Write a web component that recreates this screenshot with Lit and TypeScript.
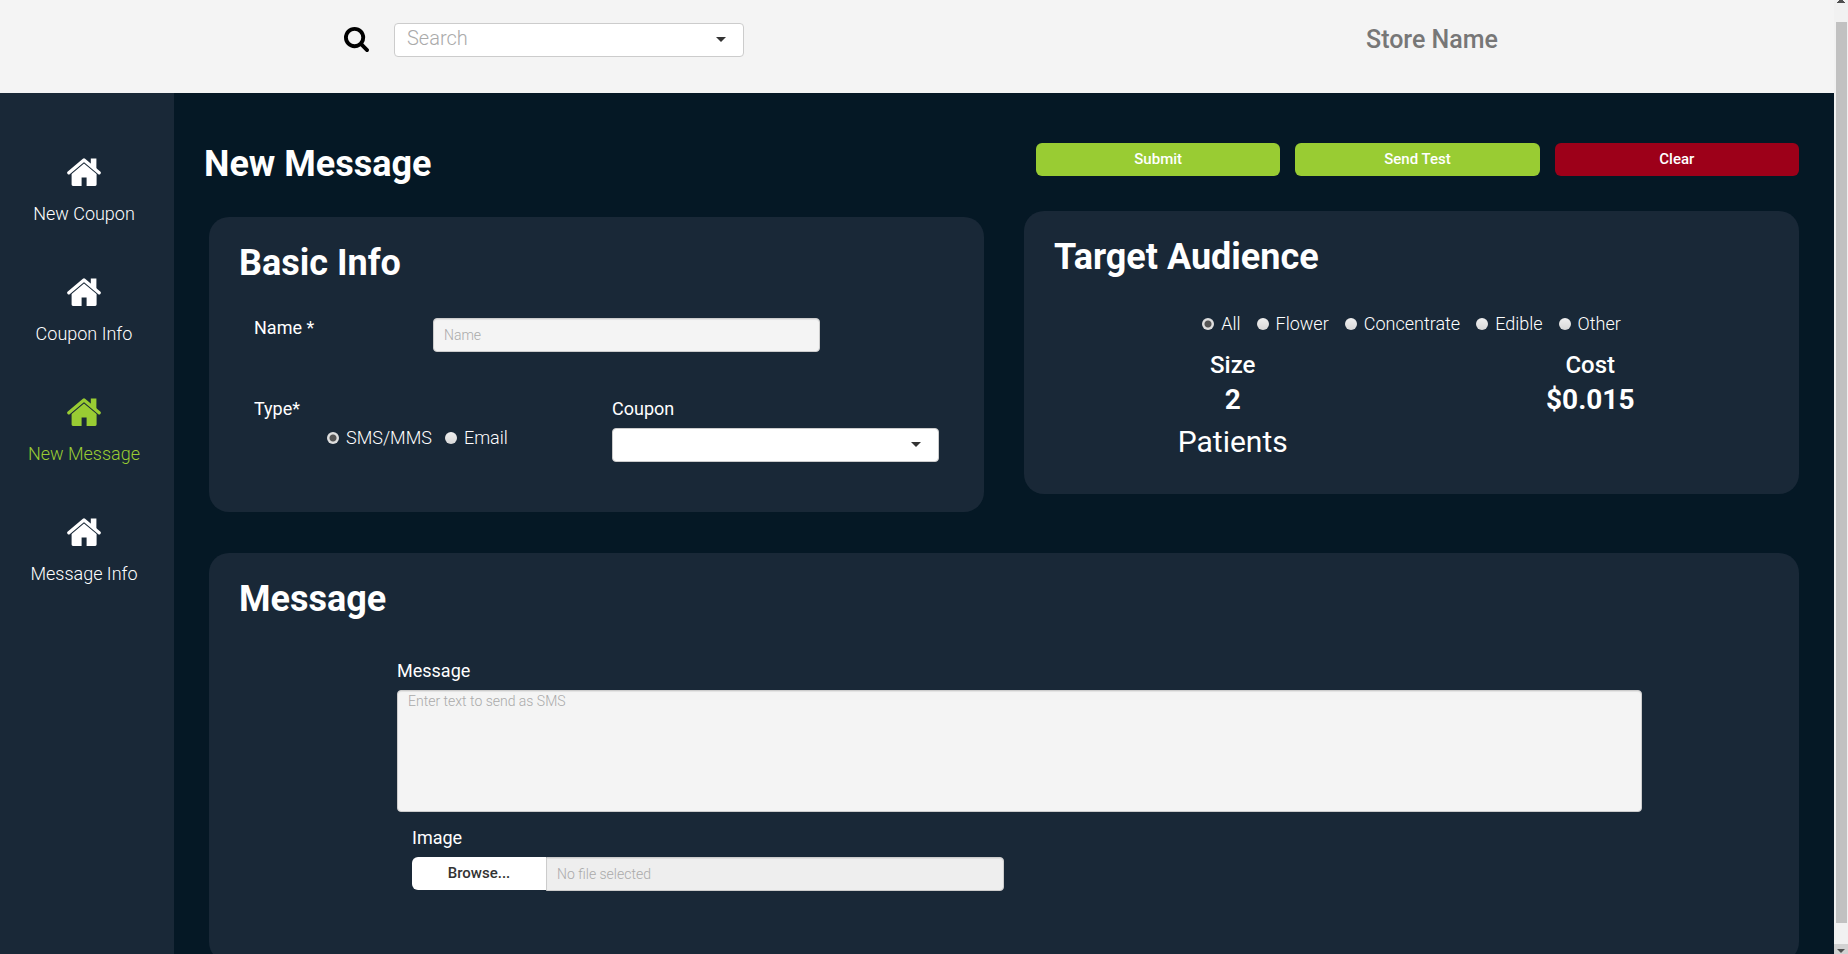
import { LitElement, html, css } from "lit";
import { customElement, state, query } from "lit/decorators.js";
import { classMap } from "lit/directives/class-map.js";

const homeIcon = html`<svg class="home" viewBox="0 0 34 28" aria-hidden="true">
  <path d="M1.9 14.8 L17 2 L32.1 14.8" fill="none" stroke="currentColor" stroke-width="3.4" stroke-linecap="round" stroke-linejoin="round"/>
  <path d="M23.8 0.4h5.6v11l-5.6-4.8z" fill="currentColor"/>
  <path d="M17 5.4 L29.6 16 V26.6 a1.4 1.4 0 0 1-1.4 1.4 H19.6 V19.4 H14.6 V28 H6 a1.4 1.4 0 0 1-1.4-1.4 V16 Z" fill="currentColor"/>
</svg>`;

const caret = html`<svg class="caret" viewBox="0 0 10 5" aria-hidden="true"><path d="M0 0h10L5 5z" fill="currentColor"/></svg>`;

@customElement("app-root")
export class AppRoot extends LitElement {
  @state() private page = "New Message";
  @state() private fileName = "";
  @query(".picker") private picker!: HTMLInputElement;

  static styles = css`
    :host {
      display: grid;
      grid-template-columns: minmax(0, 1fr) 14px;
      height: 100vh;
      overflow: hidden;
      background: #051825;
      color: #fff;
      font-family: Roboto, "Liberation Sans", sans-serif;
      font-size: 18px;
      line-height: 20px;
    }
    *, *::before, *::after { box-sizing: border-box; }
    h1, h2, p { margin: 0; }
    button, input, select, textarea { font: inherit; margin: 0; }

    .page { display: grid; grid-template-rows: 93px auto; min-height: 0; }
    .top {
      display: grid;
      grid-template-columns: 344fr 50fr 350fr 286fr 804fr;
      align-items: start;
      padding-top: 23px;
      background: #f4f4f4;
    }
    .search-label { grid-column: 2; display: block; padding-top: 4px; color: #000; }
    .search-icon { display: block; width: 25px; height: 25px; }
    .store {
      grid-column: 5;
      text-align: center;
      font-size: 25px;
      line-height: 34px;
      font-weight: 500;
      color: #777;
    }

    .body { display: grid; grid-template-columns: 174px minmax(0, 1fr); }
    .side { background: #192837; padding: 65px 6px 0 0; }
    .side a {
      display: flex;
      flex-direction: column;
      align-items: center;
      gap: 18px;
      height: 120px;
      color: #fff;
      font-size: 18px;
      font-weight: 300;
      text-decoration: none;
    }
    .side a.active { color: #9c3; }
    .home { display: block; width: 34px; height: 28px; }

    main { padding: 50px 35px 40px 30px; }
    .columns { display: grid; grid-template-columns: 1fr 1fr; gap: 35px; align-items: start; }
    .title, .heading { font-size: 36px; line-height: 42px; font-weight: 700; }
    .title { margin-bottom: 32px; }
    .actions {
      display: grid;
      grid-template-columns: repeat(3, 1fr);
      gap: 15px;
      padding-left: 17px;
      margin-bottom: 35px;
    }
    .btn {
      height: 33px;
      border: 0;
      border-radius: 6px;
      padding: 0 6px 2px;
      background: #9c3;
      color: #fff;
      font-size: 15px;
      font-weight: 500;
      cursor: pointer;
    }
    .btn.danger { background: #9d0019; }

    .card { margin-left: 5px; padding: 25px 30px 50px; border-radius: 20px; background: #192837; }
    .card.audience { padding-bottom: 28px; }
    .card.message { margin-top: 41px; padding-bottom: 71px; }

    .fields { padding: 34px 15px 0; }
    .name-row { display: grid; grid-template-columns: 179fr 387fr 119fr; margin-bottom: 47px; }
    .type-row { display: grid; grid-template-columns: 358fr 327fr; }
    fieldset { border: 0; margin: 0; padding: 0; min-width: 0; }
    legend, .label { display: block; padding: 0; font-weight: 400; }
    .stack { display: grid; gap: 9px; align-content: start; }

    .control {
      display: block;
      width: 100%;
      height: 34px;
      padding: 0 10px 1px;
      border: 1px solid #ccc;
      border-radius: 4px;
      background: #f4f4f4;
      box-shadow: inset 0 1px 1px rgba(0, 0, 0, 0.075);
      color: #333;
      font-size: 14px;
      font-weight: 300;
      outline: none;
    }
    .control::placeholder { color: #aaa; opacity: 1; }
    textarea.control { height: 122px; line-height: 20px; resize: none; }
    .pick { position: relative; color: #333; }
    .pick .control {
      appearance: none;
      background: #fff;
      box-shadow: none;
      padding: 0 36px 4px 12px;
      color: #aaa;
      font-size: 20px;
    }
    .caret { position: absolute; right: 18px; top: 14px; width: 10px; height: 5px; pointer-events: none; }

    .radios { display: flex; gap: 16px; font-weight: 300; }
    .types { gap: 13px; padding: 9px 0 0 73px; }
    .groups { justify-content: center; padding-top: 36px; }
    .radio { display: flex; align-items: center; gap: 7px; }
    .radio input {
      appearance: none;
      width: 12px;
      height: 12px;
      border-radius: 50%;
      background: linear-gradient(#f0f0f0, #d8d8d8);
    }
    .radio input:checked { background: radial-gradient(circle, #555 0 3px, #dedede 4px); }

    .totals { display: grid; grid-template-columns: 1fr 1fr; padding-top: 14px; text-align: center; }
    .totals .name { font-size: 24px; line-height: 34px; font-weight: 500; }
    .totals .value { font-size: 28px; line-height: 36px; font-weight: 700; }
    .totals .unit { font-size: 30px; line-height: 48px; }

    .message-grid { display: grid; grid-template-columns: 158fr 1245fr 127fr; padding-top: 41px; }
    .message-fields { grid-column: 2; display: grid; gap: 16px; }
    .image { display: grid; grid-template-columns: 592fr 638fr; padding-left: 15px; }
    .file { display: grid; grid-template-columns: 134fr 458fr; align-items: start; }
    .btn.browse { background: #fff; color: #333; border-radius: 6px 0 0 6px; }
    .file .control { border-radius: 0 4px 4px 0; background: #eee; }

    .rail { display: grid; grid-template-rows: 22px 901fr 21px 10px; background: #f1f1f1; color: #505050; }
    .rail svg { display: block; width: 8px; height: 4px; margin: 0 auto; }
    .thumb { grid-row: 2; margin: 0 1px 0 2px; background: #c1c1c1; }
    .down { grid-row: 4; background: #d2d2d2; padding-top: 5px; }
  `;

  private radio(group: string, text: string, on = false) {
    return html`<label class="radio"><input type="radio" name=${group} .checked=${on} />${text}</label>`;
  }

  private go(e: Event, name: string) {
    e.preventDefault();
    this.page = name;
  }

  render() {
    return html`
      <div class="page">
        <header class="top">
          <label class="search-label" for="search" aria-label="Search">
            <svg class="search-icon" viewBox="64 128 1664 1664" aria-hidden="true">
              <path fill="currentColor" d="M1216 832q0-185-131.5-316.5t-316.5-131.5-316.5 131.5-131.5 316.5 131.5 316.5 316.5 131.5 316.5-131.5 131.5-316.5zm512 832q0 52-38 90t-90 38q-54 0-90-38l-343-342q-179 124-399 124-143 0-273.5-55.5t-225-150-150-225-55.5-273.5 55.5-273.5 150-225 225-150 273.5-55.5 273.5 55.5 225 150 150 225 55.5 273.5q0 220-124 399l343 343q37 37 37 90z"/>
            </svg>
          </label>
          <div class="pick">
            <select class="control" id="search"><option>Search</option></select>${caret}
          </div>
          <div class="store">Store Name</div>
        </header>
        <div class="body">
          <nav class="side">
            ${["New Coupon", "Coupon Info", "New Message", "Message Info"].map(
              (name) => html`<a href="#" class=${classMap({ active: name === this.page })}
                @click=${(e: Event) => this.go(e, name)}>${homeIcon}<span>${name}</span></a>`
            )}
          </nav>
          <main>
            <div class="columns">
              <div>
                <h1 class="title">New Message</h1>
                <section class="card">
                  <h2 class="heading">Basic Info</h2>
                  <div class="fields">
                    <div class="name-row">
                      <label class="label" for="name">Name *</label>
                      <input class="control" id="name" type="text" placeholder="Name" />
                    </div>
                    <div class="type-row">
                      <fieldset>
                        <legend>Type*</legend>
                        <div class="radios types">
                          ${this.radio("type", "SMS/MMS", true)}${this.radio("type", "Email")}
                        </div>
                      </fieldset>
                      <div class="stack">
                        <label class="label" for="coupon">Coupon</label>
                        <div class="pick">
                          <select class="control" id="coupon"><option></option></select>${caret}
                        </div>
                      </div>
                    </div>
                  </div>
                </section>
              </div>
              <div>
                <div class="actions">
                  <button class="btn" type="button">Submit</button>
                  <button class="btn" type="button">Send Test</button>
                  <button class="btn danger" type="button">Clear</button>
                </div>
                <section class="card audience">
                  <h2 class="heading">Target Audience</h2>
                  <div class="radios groups" role="radiogroup" aria-label="Target Audience">
                    ${["All", "Flower", "Concentrate", "Edible", "Other"].map((t, i) => this.radio("group", t, i === 0))}
                  </div>
                  <div class="totals">
                    <div>
                      <p class="name">Size</p>
                      <p class="value">2</p>
                      <p class="unit">Patients</p>
                    </div>
                    <div>
                      <p class="name">Cost</p>
                      <p class="value">$0.015</p>
                    </div>
                  </div>
                </section>
              </div>
            </div>
            <section class="card message">
              <h2 class="heading">Message</h2>
              <div class="message-grid">
                <div class="message-fields">
                  <div class="stack">
                    <label class="label" for="text">Message</label>
                    <textarea class="control" id="text" placeholder="Enter text to send as SMS"></textarea>
                  </div>
                  <div class="image">
                    <div class="stack">
                      <label class="label" for="file">Image</label>
                      <div class="file">
                        <button class="btn browse" type="button" @click=${() => this.picker.click()}>Browse...</button>
                        <input class="control" id="file" type="text" readonly placeholder="No file selected" .value=${this.fileName} />
                        <input class="picker" type="file" accept="image/*" hidden
                          @change=${() => (this.fileName = this.picker.files?.[0]?.name ?? "")} />
                      </div>
                    </div>
                  </div>
                </div>
              </div>
            </section>
          </main>
        </div>
      </div>
      <div class="rail" aria-hidden="true">
        <svg viewBox="0 0 8 4"><path d="M2 0h4v1h1v1h1v1H0V2h1V1h1z" fill="currentColor"/></svg>
        <div class="thumb"></div>
        <div class="down"><svg viewBox="0 0 8 4"><path d="M0 0h8L4 4z" fill="currentColor"/></svg></div>
      </div>
    `;
  }
}
